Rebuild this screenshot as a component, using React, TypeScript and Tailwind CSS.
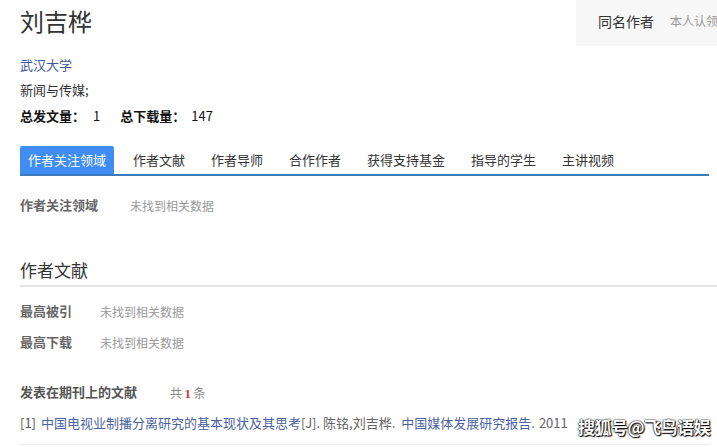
import React from "react";

const FONT = '"Noto Sans CJK SC", "Liberation Sans", sans-serif';
const SERIF = '"Liberation Serif", "Noto Sans CJK SC", serif';

const tabs = ["作者文献", "作者导师", "合作作者", "获得支持基金", "指导的学生", "主讲视频"];

function EmptyRow({ label, top, labelWidth }: { label: string; top: string; labelWidth: string }) {
  return (
    <div className={`flex items-center h-[20px] ${top}`}>
      <span className={`${labelWidth} text-[13px] font-bold text-[#666]`} style={{ fontFamily: SERIF }}>
        {label}
      </span>
      <span className="text-[12px] text-[#999]">未找到相关数据</span>
    </div>
  );
}

export default function App() {
  return (
    <div className="relative w-[717px] h-[447px] overflow-hidden bg-white text-[#333]" style={{ fontFamily: FONT }}>
      {/* header */}
      <div className="flex justify-between">
        <div className="pl-[20px] pt-[5px]">
          <h1 className="text-[24px] leading-[32px] font-normal text-[#333]">刘吉桦</h1>
        </div>
        <div className="w-[141px] h-[46px] bg-[#f7f7f7] flex items-center gap-[16px] pl-[22px] pb-[4px] whitespace-nowrap overflow-hidden">
          <span className="text-[14px] text-[#333]">同名作者</span>
          <span className="text-[12px] text-[#999]">本人认领</span>
        </div>
      </div>

      <div className="px-[20px]">
        <div className="mt-[9px] h-[20px] leading-[20px] text-[13px] text-[#3d5a9a]">武汉大学</div>
        <div className="mt-[5px] h-[20px] leading-[20px] text-[13px] text-[#333]">新闻与传媒;</div>
        <div className="mt-[6px] h-[20px] leading-[20px] text-[13px] font-bold text-[#111] flex">
          <span>总发文量：</span>
          <span className="ml-[8px] font-normal">1</span>
          <span className="ml-[20px]">总下载量：</span>
          <span className="ml-[6px] font-normal">147</span>
        </div>

        {/* tabs */}
        <div className="mt-[21px] mr-[-12px] flex items-end border-b-2 border-[#3b7bbd] h-[29px]">
          <div className="h-[28px] px-[8px] flex items-center bg-[#3f8cf3] text-white text-[13px] rounded-t-[2px]">
            作者关注领域
          </div>
          <div className="flex gap-[6px] ml-[9px]">
            {tabs.map((t) => (
              <div key={t} className="h-[28px] px-[10px] flex items-center text-[13px] text-[#333]">
                {t}
              </div>
            ))}
          </div>
        </div>

        <EmptyRow label="作者关注领域" top="mt-[20px]" labelWidth="w-[110px]" />

        {/* 作者文献 */}
        <div className="mt-[42px] mr-[-20px] border-b-2 border-[#e4e4e4] pb-[3px]">
          <h2 className="text-[17px] leading-[24px] font-normal text-[#333]">作者文献</h2>
        </div>
        <EmptyRow label="最高被引" top="mt-[15px]" labelWidth="w-[80px]" />
        <EmptyRow label="最高下载" top="mt-[11px]" labelWidth="w-[80px]" />

        <div className="mt-[30px] flex items-center h-[20px]">
          <span className="w-[150px] text-[13px] font-bold text-[#555]" style={{ fontFamily: SERIF }}>
            发表在期刊上的文献
          </span>
          <span className="text-[12px] text-[#888]">
            共 <span className="text-[#c33] font-bold" style={{ fontFamily: SERIF }}>1</span> 条
          </span>
        </div>

        <div className="mt-[10px] mr-[-12px] h-[32px] border-b border-[#ececec] flex items-start whitespace-nowrap overflow-hidden text-[13px] leading-[20px]">
          <span className="text-[#555]">[1]</span>
          <span className="ml-[5px] text-[#4a62a0]">中国电视业制播分离研究的基本现状及其思考</span>
          <span className="text-[#666]">[J]. 陈铭,刘吉桦.</span>
          <span className="ml-[6px] text-[#4a62a0]">中国媒体发展研究报告.</span>
          <span className="ml-[4px] text-[#666]">2011</span>
        </div>
      </div>

      {/* watermark */}
      <div
        className="absolute left-[578px] top-[416px] text-[17px] leading-[22px] font-bold text-white tracking-[-0.5px] whitespace-nowrap"
        style={{ textShadow: "0 0 2px #000, 0 0 1px #000, 1px 1px 1px #000" }}
      >
        搜狐号@飞鸟语娱
      </div>
    </div>
  );
}
